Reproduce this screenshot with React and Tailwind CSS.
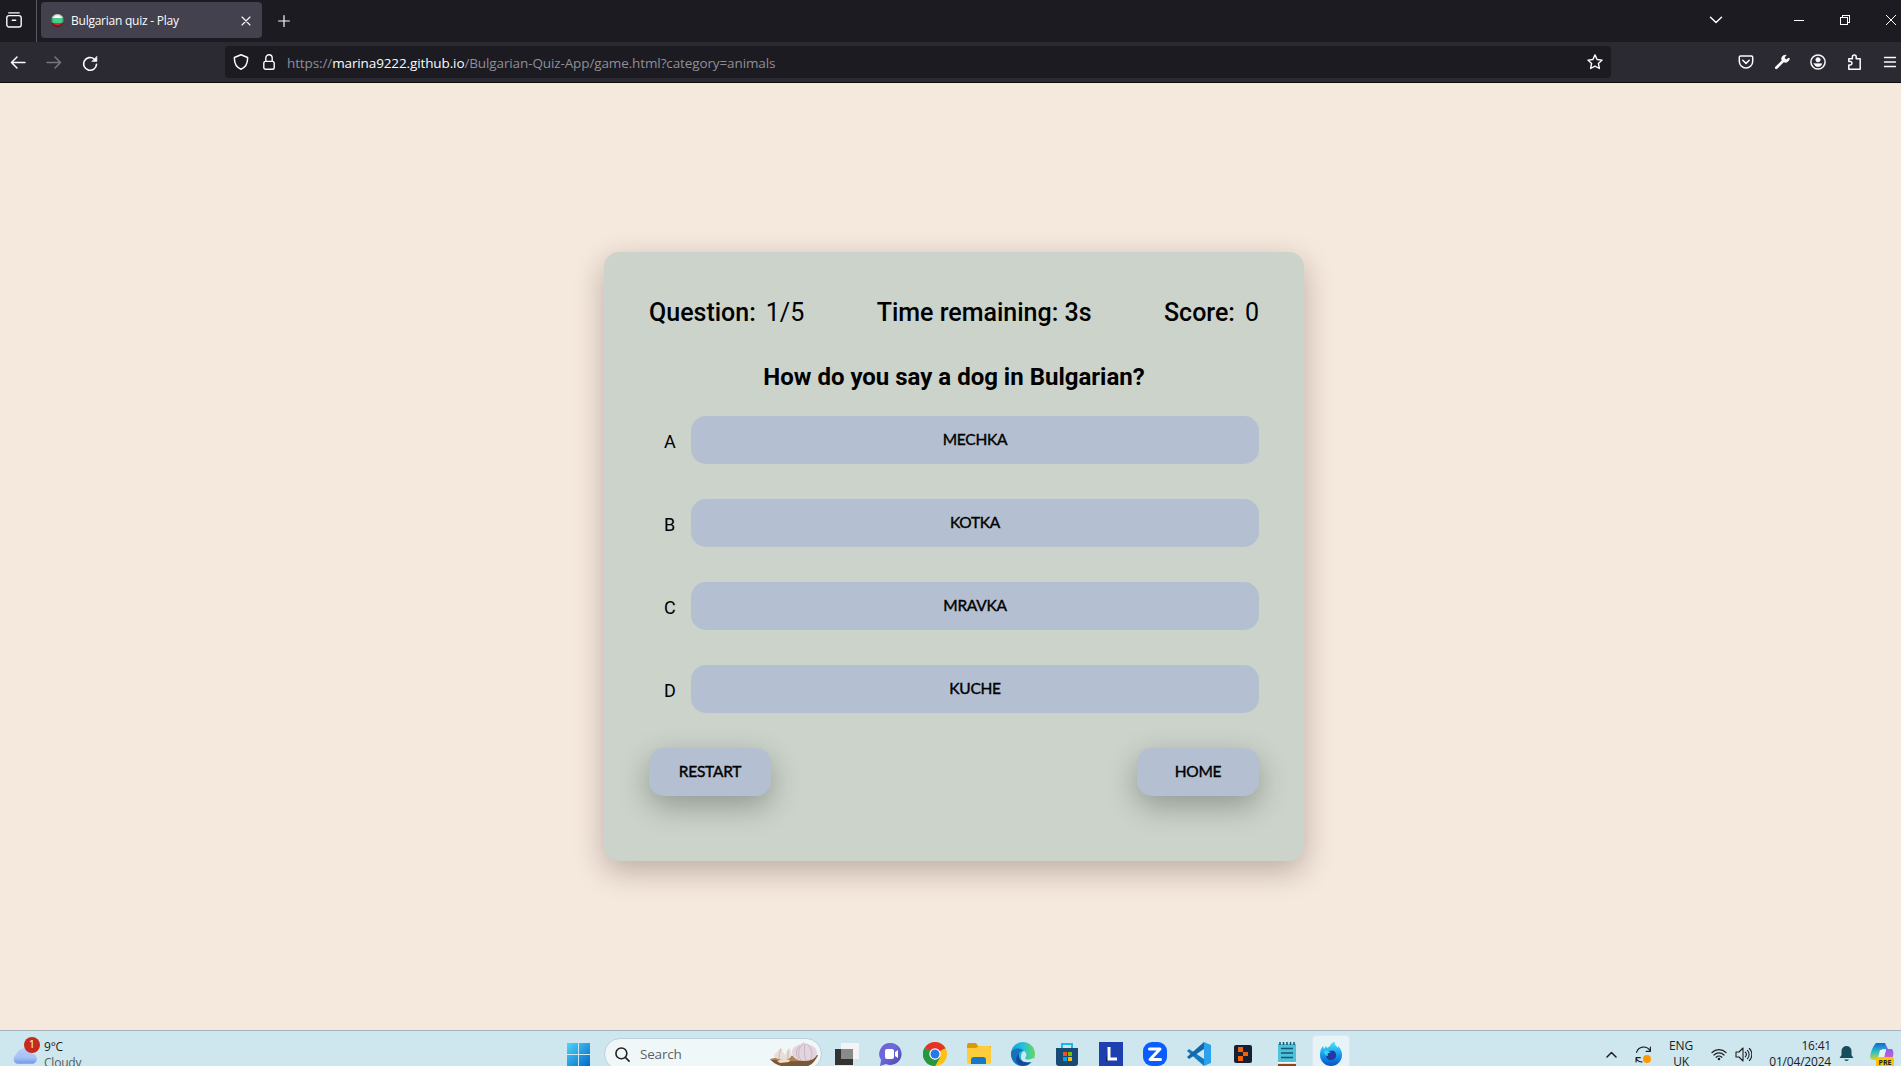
import React from "react";

const ui = "font-['Open_Sans','Noto_Sans',sans-serif]";
const stroke = { fill: "none", stroke: "currentColor", strokeLinecap: "round", strokeLinejoin: "round" };

const answers = [
  { letter: "A", text: "MECHKA" },
  { letter: "B", text: "KOTKA" },
  { letter: "C", text: "MRAVKA" },
  { letter: "D", text: "KUCHE" },
];

function Line({ className = "size-4", width = 1.4, viewBox = "0 0 16 16", children }) {
  return (
    <svg className={className + " shrink-0"} viewBox={viewBox} strokeWidth={width} {...stroke}>
      {children}
    </svg>
  );
}

function TabBar() {
  return (
    <div className="flex h-[42px] items-center bg-[#1c1b22] text-[#fbfbfe]">
      <div className="flex h-full w-[37px] shrink-0 items-center border-r border-[#5b5a63] pb-[2px] pl-[6px]">
        <Line className="size-[16px]" width={1.4}>
          <path d="M2.8 0.9h10.4" />
          <rect x="0.8" y="3.6" width="14.4" height="11.4" rx="2.2" />
          <path d="M6.3 8.2h3.4" />
        </Line>
      </div>
      <div className="-mt-[3px] ml-[4px] flex h-9 w-[221px] items-center rounded-[4px] bg-[#42414d] pl-[10px]">
        <svg className="mt-px size-[13px] shrink-0" viewBox="0 0 13 13">
          <defs>
            <clipPath id="flag"><circle cx="6.5" cy="6.5" r="6.5" /></clipPath>
            <radialGradient id="shade" cy="0.45"><stop offset="0.5" stopColor="#fff" stopOpacity="0.12" /><stop offset="1" stopOpacity="0.5" /></radialGradient>
          </defs>
          <g clipPath="url(#flag)">
            <path fill="#fff" d="M0 0h13v4H0z" />
            <path fill="#2fc779" d="M0 4h13v5H0z" />
            <path fill="#d00d20" d="M0 9h13v4H0z" />
            <path fill="url(#shade)" d="M0 0h13v13H0z" />
          </g>
        </svg>
        <span className={`ml-[7px] mt-[3px] whitespace-nowrap text-[12px] tracking-[-0.24px] ${ui}`}>Bulgarian quiz - Play</span>
        <Line className="ml-auto mr-[11px] mt-[2px] size-[10px]" width={1.1} viewBox="0 0 10 10"><path d="M1 1l8 8M9 1l-8 8" /></Line>
      </div>
      <Line className="ml-[16px] -mt-px size-[12px]" width={1.2} viewBox="0 0 12 12"><path d="M6 .6v10.8M.6 6h10.8" /></Line>
      <div className="ml-auto flex items-center pb-[2px] pr-[5px]">
        <Line className="mr-[71px] h-[8px] w-[14px]" width={1.5} viewBox="0 0 14 8"><path d="M1.5 1.3L7 6.5l5.500-5.200" /></Line>
        <div className="mr-[36px] h-px w-[10px] bg-white" />
        <svg className="mr-[36px] size-[10px]" viewBox="0 0 10 10" fill="none" stroke="#fff" shapeRendering="crispEdges">
          <path d="M.5 2.500h7v7h-7zM2.500 2.500v-2h7v7h-2" />
        </svg>
        <svg className="size-[10px]" viewBox="0 0 10 10" stroke="#fff" strokeWidth="1"><path d="M0 0l10 10M10 0L0 10" /></svg>
      </div>
    </div>
  );
}

function Toolbar() {
  return (
    <div className="flex h-[41px] items-center border-b border-[#0c0c0d] bg-[#2b2a33] text-[#fbfbfe]">
      <Line className="ml-[10px] size-4" width={1.5}><path d="M15 8.500H1.500M7 3L1.500 8.500 7 14" /></Line>
      <Line className="ml-[20px] size-4 text-[#77767e]" width={1.5}><path d="M1 8.500h13.500M9 3l5.500 5.500L9 14" /></Line>
      <Line className="ml-[20px] mt-px size-4" width={1.6}>
        <path d="M14.500 9.200A6.400 6.400 0 1 1 12.200 4" />
        <path fill="currentColor" strokeWidth="0.6" d="M14.900 1.600v4.800h-4.800z" />
      </Line>
      <div className="ml-[127px] flex h-8 w-[1386px] items-center rounded-[4px] bg-[#1c1b22] pl-[8px] pr-[8px]">
        <Line className="size-4" width={1.5}><path d="M8 .8l6.600 2.700c.2 5.200-1.600 9.800-6.600 11.700C3 13.300 1.200 8.700 1.400 3.500z" /></Line>
        <Line className="ml-[14px] h-4 w-[12px]" width={1.4} viewBox="0 0 12 16">
          <rect x=".8" y="7.400" width="10.400" height="7.800" rx="1.800" />
          <path d="M2.800 7.200V4a3.200 3.200 0 0 1 6.400 0v3.200" />
        </Line>
        <span className={`ml-[12px] mt-[3px] whitespace-nowrap text-[13.5px] tracking-[-0.115px] text-[#8f8f96] ${ui}`}>
          https://<span className="text-[#fbfbfe]">marina9222.github.io</span>/Bulgarian-Quiz-App/game.html?category=animals
        </span>
        <Line className="ml-auto size-4" width={1.4}>
          <path d="M8 .9l2.100 4.600 5 .6-3.700 3.400 1 5L8 12.100l-4.400 2.400 1-5L.9 6.100l5-.6z" />
        </Line>
      </div>
      <div className="ml-auto flex items-center gap-[20px] pr-[3px]">
        <Line className="size-4" width={1.5}>
          <path d="M2.500 2h11c.7 0 1.200.5 1.200 1.200v4a6.700 6.700 0 0 1-13.400 0v-4C1.300 2.500 1.800 2 2.500 2z" />
          <path d="M4.800 6.300L8 9.400l3.200-3.100" />
        </Line>
        <Line className="size-4" width={1}>
          <path d="M2.300 13.800l7-7" strokeWidth="2.700" />
          <path fill="currentColor" d="M11.800 1.300c-2.500-.3-4.400 1.600-4 4.100 1 2.300 3.700 3.600 5.700 2.200 1.300-.8 1.800-2.200 1.600-3.500l-2.600 1.600-1.700-.7-.5-1.500z" />
        </Line>
        <Line className="size-4" width={1.5}>
          <circle cx="8" cy="8" r="7.100" />
          <circle cx="8" cy="5.800" r="2.200" fill="currentColor" strokeWidth=".6" />
          <path fill="currentColor" strokeWidth=".6" d="M4.200 9.700h7.600c-.4 2-1.900 2.900-3.800 2.900s-3.400-.9-3.800-2.900z" />
        </Line>
        <Line className="size-4" width={1.5}>
          <path d="M2.800 15.200V11h1.500a1.700 1.700 0 0 0 0-3.400H2.800V4.700h3.600V2.800a1.900 1.900 0 0 1 3.800 0v1.900h4v10.500z" />
        </Line>
        <Line className="size-4" width={1.3}><path d="M2.500 3.500h11M2.500 8h11M2.500 12.500h11" /></Line>
      </div>
    </div>
  );
}

function ActionButton({ children, className = "" }) {
  return (
    <button className={`flex h-12 items-center justify-center rounded-[15px] bg-[#b4c0d1] pb-px font-['Lato',sans-serif] text-[15.5px] font-normal tracking-[-0.25px] text-black [-webkit-text-stroke:0.4px_black] ${className}`}>
      {children}
    </button>
  );
}

function QuizCard() {
  return (
    <section className="mt-[169px] h-[609px] w-[700px] rounded-[15px] bg-[#cbd3ca] px-[45px] pt-[46px] font-['Roboto',sans-serif] text-black shadow-[0_10px_30px_rgba(40,15,10,0.27)]">
      <div className="flex items-center justify-between text-[25px] leading-[30px] whitespace-nowrap">
        <p className="font-medium">Question:<span className="ml-[10px] font-normal">1/5</span></p>
        <p className="font-medium">Time remaining: 3s</p>
        <p className="font-medium">Score:<span className="ml-[10px] font-normal">0</span></p>
      </div>
      <h1 className="mt-[34px] text-center text-[24px] leading-[30px] font-bold">How do you say a dog in Bulgarian?</h1>
      <div className="mt-[24px] flex flex-col gap-[35px]">
        {answers.map((a) => (
          <div key={a.letter} className="flex items-center">
            <span className="w-[42px] pl-[15px] pt-[3px] text-[18px]">{a.letter}</span>
            <ActionButton className="flex-1">{a.text}</ActionButton>
          </div>
        ))}
      </div>
      <div className="mt-[35px] flex justify-between">
        <ActionButton className="w-[122px] shadow-[0_10px_30px_rgba(0,0,0,0.28)]">RESTART</ActionButton>
        <ActionButton className="w-[122px] shadow-[0_10px_30px_rgba(0,0,0,0.28)]">HOME</ActionButton>
      </div>
    </section>
  );
}

function Garlic() {
  return (
    <svg className="ml-auto mr-[2px] mt-[2px] h-[26px] w-[50px] shrink-0" viewBox="0 0 50 26">
      <path d="M1 17l10 1 30-4 8-1c-3 7-8 13-20 13S6 24 1 17z" fill="#795638" />
      <path d="M1 17l14-3 34-1c-7 7-34 8-48 4z" fill="#ad8256" />
      <path d="M23 10c0-5 6-7 9-8l3-2 3 2c4 1 10 3 10 9 0 5-6 8-12 8-8 0-13-3-13-9z" fill="#e3d5de" />
      <path d="M34 2c-5 4-6 13-1 17M36 2c-1 5-1 12 1 17M38 2c6 5 6 12 3 16M31 4c-5 4-4 10-1 13" stroke="#c2acc0" strokeWidth=".8" fill="none" />
      <path d="M5 14c0-3 4-4 7-9 1 4 3 6 4 8 1-3 3-4 4-8 2 4 4 8 1 11-4 3-14 2-16-2z" fill="#eaded9" />
      <path d="M12 7c-2 4-2 7-2 10M19 8v9" stroke="#c4aba5" strokeWidth=".8" fill="none" />
      <path d="M8 19l7-2 6 1-1 2-9 1z" fill="#f3dfc0" />
    </svg>
  );
}

const apps = [
  { name: "desktops", art: <><path d="M0 7h18v16H0z" fill="#333" /><path d="M6 1h18v16H6z" fill="#f4f4f4" /><path d="M6 7h12v10H6z" fill="#8a8a8a" /></> },
  { name: "chat", art: <><path d="M12 1a11 11 0 1 1-5 21L1 24l1-6A11 11 0 0 1 12 1z" fill="url(#chat)" /><rect x="6" y="7" width="9" height="10" rx="2" fill="#fff" /><path d="M16 10l3-2v8l-3-2z" fill="#fff" /></> },
  { name: "chrome", art: <><circle cx="12" cy="12" r="12" fill="#fbc116" /><path d="M12 12L1.600 6a12 12 0 0 1 20.800 0z" fill="#e53427" /><path d="M1.600 6A12 12 0 0 0 12 24l5.200-9L12 12z" fill="#26979f" /><path d="M1.600 6A12 12 0 0 0 12 24l5.200-9L12 12z" fill="#26973f" /><path d="M12 6.500h10.700L22.400 6H12z" fill="#e53427" /><circle cx="12" cy="12" r="5.700" fill="#fff" /><circle cx="12" cy="12" r="4.500" fill="#2878e8" /></> },
  { name: "files", art: <><path d="M0 3.500C0 2 .8 1 2 1h7l2 3H24v5H0z" fill="#dc9a00" /><path d="M0 6h9l3-2h10q2 0 2 2v14q0 2-2 2H2q-2 0-2-2z" fill="#ffcc3c" /><path d="M4 22v-4q0-3 3-3h9q3 0 3 3v4z" fill="#1679c5" /></> },
  { name: "edge", art: <><circle cx="12" cy="12" r="12" fill="url(#edge)" /><path d="M0 11c1-5 9-6 13-2-3-1-6 2-5 6 1 5 7 6 13 4-2 3-5 5-9 5C5 24 0 19 0 11z" fill="#1672ba" /><path d="M8 12c-1 7 6 10 13 7-4 5-9 5-12 4-5-2-5-8-1-11z" fill="#124c98" /><path d="M13 9c3 2 3 5 1 7 1 2 5 2 8 0l2 2-3 2c-6 1-11 0-11-5 0-3 1-5 3-6z" fill="#cfe8ef" /></> },
  { name: "store", art: <><path d="M7 7V2h10v5" stroke="#18b7ee" strokeWidth="2" fill="none" /><path d="M1 6h22v15q0 3-3 3H4q-3 0-3-3z" fill="#174b75" /><path d="M8 10h4v4H8z" fill="#f25022" /><path d="M13 10h4v4h-4z" fill="#7fba00" /><path d="M8 15h4v4H8z" fill="#00a4ef" /><path d="M13 15h4v4h-4z" fill="#ffb900" /></> },
  { name: "lexis", art: <><path d="M0 0h24v24H0z" fill="#1d3faf" /><path d="M9 6L7 20l2-2z" fill="#08192e" /><path d="M10 5v12h8" stroke="#fff" strokeWidth="3" fill="none" /></> },
  { name: "zoom", art: <><rect width="24" height="24" rx="9" fill="#0b5cff" /><path d="M6.500 7h10.500L7 17.500h10.500" stroke="#fff" strokeWidth="3" strokeLinejoin="round" strokeLinecap="round" fill="none" /></> },
  { name: "code", art: <><path d="M2 7L0 9l17 15v-7z" fill="#137bbd" /><path d="M2 17l-2-2L17 0v7z" fill="#1168aa" /><path d="M17 0l7 3v18l-7 3z" fill="#2ca2ec" /></> },
  { name: "editor", art: <><rect x="3" y="3" width="18" height="18" rx="2" fill="#172033" /><path d="M7 5h5v5H7zm5 5h5v4h-5zm-5 4h5v5H7z" fill="#f26207" /></> },
  { name: "notes", art: <><path d="M3 2h18v18H3z" fill="#4fc1d9" /><path d="M5 0v3m3.500-3v3M12 0v3m3.500-3v3M19 0v3" stroke="#14546a" strokeWidth="1.500" /><path d="M6 6.500h12M6 11h12M6 15.500h12" stroke="#125a74" strokeWidth="1.700" /><path d="M3 20h18v1H3z" fill="#fff" /><path d="M3 22h18v2H3z" fill="#8b4715" /></> },
  { name: "browser", art: <><path d="M11 4c1-3 3-4 5-4-1 3 2 4 3 6V4c3 3 4 6 4 9a11 11 0 0 1-22 0c0-4 1-7 3-9l1 3 2-3 1 2z" fill="url(#fox)" /><path d="M7 13c0-4 6-5 8-4 4 3 2 9-3 9-3 0-5-2-5-5z" fill="#26379f" /><path d="M5 9c3-1 5 0 7 2-3-1-4 1-3 3-2 0-4-2-4-5z" fill="#35d6f3" /></> },
];

function Taskbar() {
  return (
    <footer className={`h-9 overflow-hidden border-t border-[#a3b3bd] bg-[#cee7ee] text-[#1c2022] ${ui}`}>
      <div className="grid h-[46px] grid-cols-[567px_784px_1fr] items-center">
        <div className="flex pl-[12px] pt-px">
          <div className="relative h-[32px] w-[32px]">
            <svg className="mt-[8px] h-[17px] w-[25px]" viewBox="0 0 24 16">
              <path d="M5 16a5 5 0 0 1-1-9C6 1 16-2 19 6c7 1 6 10 0 10z" fill="url(#cloud)" />
            </svg>
            <span className="absolute -top-[2px] left-[12px] flex size-4 items-center justify-center rounded-full bg-[#c42b1c] text-[11px] text-white">1</span>
          </div>
          <div className="text-[12px] leading-4 tracking-[-0.2px]"><p>9°C</p><p className="text-[#505d62]">Cloudy</p></div>
        </div>
        <div className="flex items-center">
          <svg className="size-[23px] shrink-0" viewBox="0 0 23 23"><path fill="url(#win)" d="M0 0h11v11H0zM12 0h11v11H12zM0 12h11v11H0zM12 12h11v11H12z" /></svg>
          <div className="ml-[14px] flex h-8 w-[218px] shrink-0 items-center rounded-full border border-[#bbd2da] bg-[#f0f7f9] pl-[10px] text-[#5b6265]">
            <Line className="size-[15px] text-[#202224]" width={1.700}><circle cx="6.800" cy="6.800" r="5.800" /><path d="M11 11l4 4" /></Line>
            <span className="ml-[10px] text-[13.5px] tracking-[-0.2px]">Search</span>
            <Garlic />
          </div>
          <div className="ml-[3px] flex items-center">
            {apps.map((app) => (
              <div key={app.name} className="flex w-11 justify-center">
                <div className={app.name === "browser" ? "flex size-[38px] items-center justify-center rounded-[4px] border border-[#dbe9ee] bg-[#e8f3f8]" : "flex size-[38px] items-center justify-center"}>
                  <svg className="size-6" viewBox="0 0 24 24">{app.art}</svg>
                </div>
              </div>
            ))}
          </div>
        </div>
        <div className="flex items-center justify-end pr-[6px]">
          <Line className="h-[7px] w-[11px]" width={1.500} viewBox="0 0 11 7"><path d="M1 6l4.500-4.500L10 6" /></Line>
          <div className="relative ml-[18px] size-[17px]">
            <Line className="size-[17px]" width={1.100}><path d="M1.500 6A7 7 0 0 1 14 4M14.500 1v4h-4M1 15v-4h4M1 11.500c1 2.200 3 3.500 5.500 3.500" /></Line>
            <span className="absolute left-[8px] top-[9px] size-2 rounded-full bg-[#ff9800]" />
          </div>
          <p className="ml-[16px] w-[26px] text-center text-[12px] leading-4 tracking-[-0.2px]">ENG<br />UK</p>
          <Line className="ml-[17px] size-4" width={1.200}>
            <path d="M1 6.500a10 10 0 0 1 14 0M3 9a7 7 0 0 1 10 0M5.200 11.300a4 4 0 0 1 5.600 0" /><circle cx="8" cy="13" r=".7" fill="currentColor" />
          </Line>
          <Line className="ml-[8px] h-[15px] w-[17px]" width={1.100} viewBox="0 0 17 15">
            <path d="M1 5h3l4-4v13l-4-4H1zM10.300 5.200a3.300 3.300 0 0 1 0 4.600M12.400 3.300a6 6 0 0 1 0 8.400M14.400 1.500a8.600 8.600 0 0 1 0 12" />
          </Line>
          <p className="ml-[16px] w-[63px] whitespace-nowrap text-right text-[12px] leading-4 tracking-[-0.2px]">16:41<br />01/04/2024</p>
          <svg className="ml-[8px] h-[16px] w-[15px]" viewBox="0 0 15 16"><path d="M7.500 0a5 5 0 0 1 5 5v4l2 3H.5l2-3V5a5 5 0 0 1 5-5zM5 13.500h5q-2.500 3-5 0z" fill="#174e5d" /></svg>
          <div className="relative ml-[16px] h-6 w-[25px]">
            <svg className="size-6" viewBox="0 0 24 24">
              <path d="M6 1h9l2 6h-5l-3 11H4q-4 0-4-4 2-9 6-13z" fill="url(#copA)" />
              <path d="M15 1l3 6h4q3 4 0 9-2 6-6 6H7l2-5h4l3-10z" fill="url(#copB)" />
              <path d="M10 8h6l-2 8H8z" fill="#e6f3f5" />
            </svg>
            <span className="absolute left-[6px] top-[15px] flex h-[10px] w-[18px] items-center justify-center rounded-[2px] bg-[#ffc400] text-[7px] leading-none font-bold">PRE</span>
          </div>
        </div>
      </div>
      <svg className="absolute size-0">
        <defs>
          <linearGradient id="win" gradientUnits="userSpaceOnUse" x1="0" y1="0" x2="23" y2="23"><stop stopColor="#50d4fb" /><stop offset="1" stopColor="#0069c7" /></linearGradient>
          <linearGradient id="cloud" x2="0" y2="1"><stop stopColor="#b8cdf9" /><stop offset=".6" stopColor="#a5c1f5" /><stop offset="1" stopColor="#6f98e6" /></linearGradient>
          <linearGradient id="chat" x2="1" y2="1"><stop stopColor="#735fc8" /><stop offset=".4" stopColor="#6b6bdd" /><stop offset="1" stopColor="#5144a8" /></linearGradient>
          <linearGradient id="edge" x2="1"><stop stopColor="#159ed7" /><stop offset=".5" stopColor="#24c0dc" /><stop offset="1" stopColor="#68d95a" /></linearGradient>
          <linearGradient id="fox" x2="0" y2="1"><stop stopColor="#4be4f4" /><stop offset=".6" stopColor="#108fef" /><stop offset="1" stopColor="#0954bd" /></linearGradient>
          <linearGradient id="copA" x2="0" y2="1"><stop stopColor="#1268d3" /><stop offset=".5" stopColor="#28bfc5" /><stop offset="1" stopColor="#d5d52d" /></linearGradient>
          <linearGradient id="copB" x2="0" y2="1"><stop stopColor="#3978e8" /><stop offset=".5" stopColor="#b05ee2" /><stop offset="1" stopColor="#fa6e56" /></linearGradient>
        </defs>
      </svg>
    </footer>
  );
}

export default function App() {
  return (
    <div className="flex h-[1066px] w-[1901px] flex-col overflow-hidden bg-[#f5e8dd]">
      <TabBar />
      <Toolbar />
      <main className="flex flex-1 justify-center pl-[7px]"><QuizCard /></main>
      <Taskbar />
    </div>
  );
}
